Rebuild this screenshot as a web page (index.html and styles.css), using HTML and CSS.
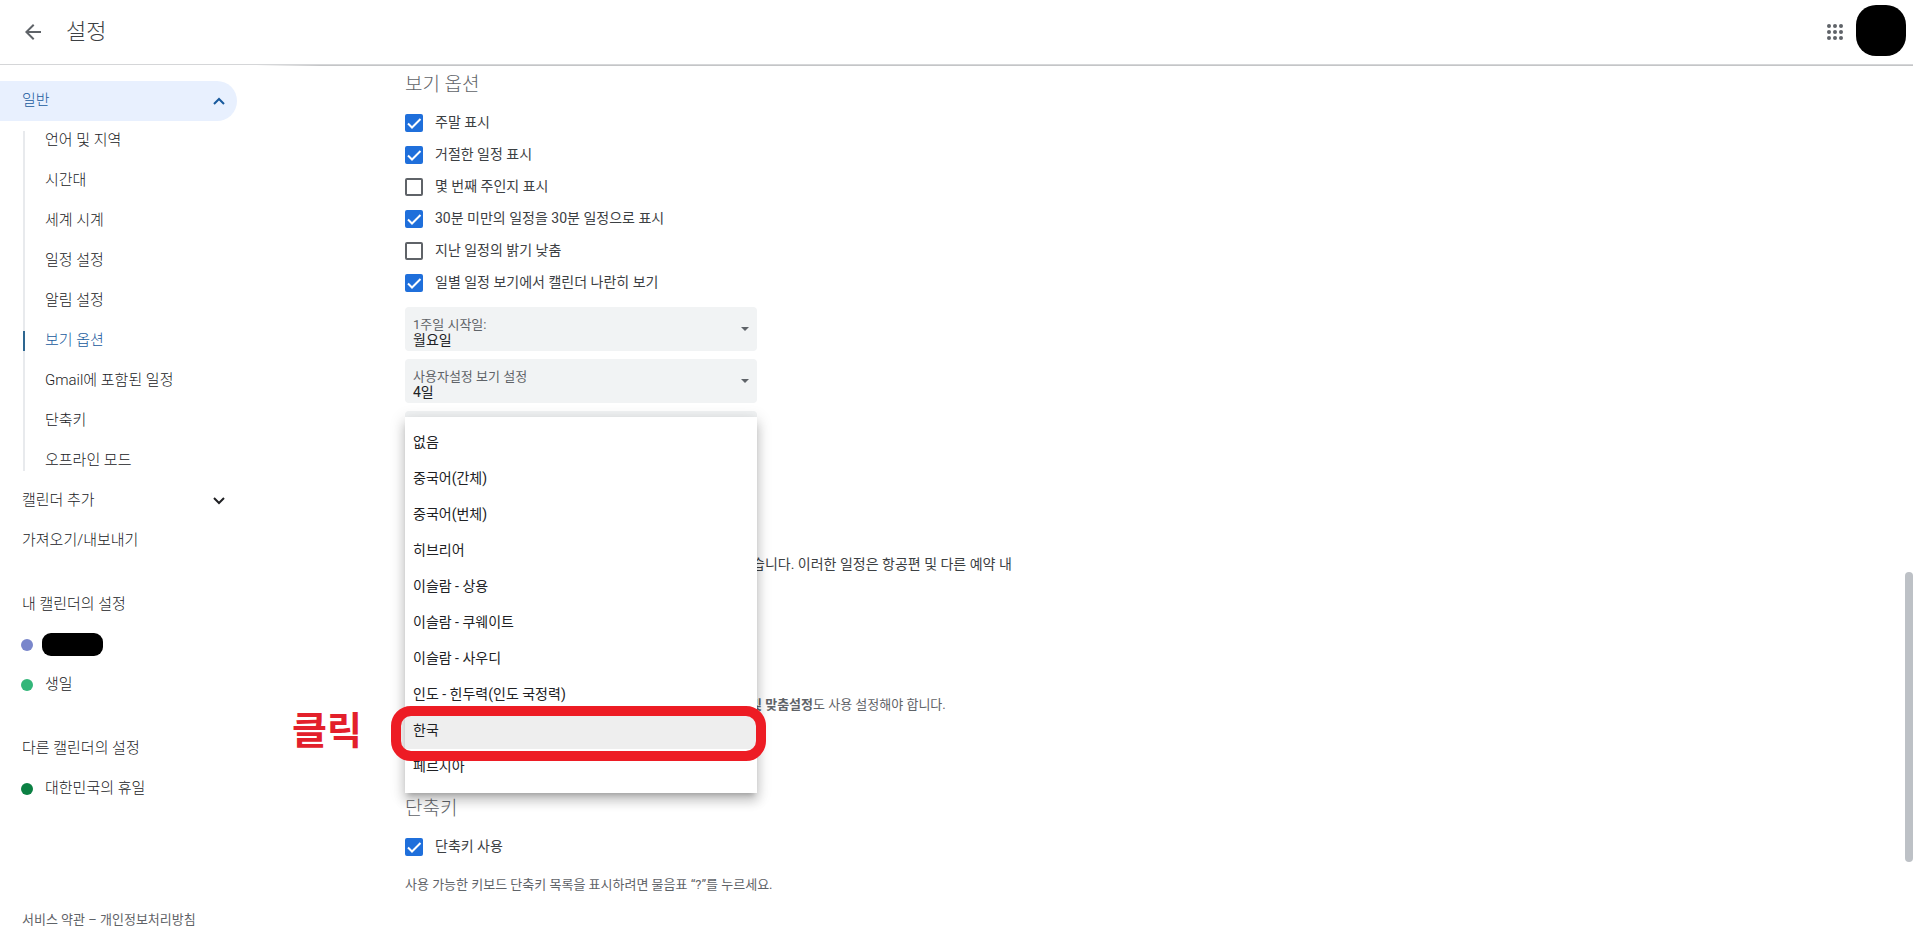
FILE: index.html
```html
<!DOCTYPE html>
<html lang="ko">
<head>
<meta charset="utf-8">
<title>설정</title>
<meta name="viewport" content="width=device-width, initial-scale=1">
<link rel="stylesheet" href="styles.css">
</head>
<body>
<svg class="defs" aria-hidden="true">
  <symbol id="tick" viewBox="0 0 18 18"><path d="M3 9.5 7 13.5 15.5 5" fill="none" stroke="currentColor" stroke-width="2"/></symbol>
  <symbol id="caret" viewBox="0 0 8 4"><path d="M0 0h8L4 4z" fill="currentColor"/></symbol>
</svg>

<header class="topbar">
  <button class="icon-button" type="button" aria-label="뒤로">
    <svg viewBox="0 0 24 24" width="24" height="24"><path d="M20 11H7.83l5.59-5.59L12 4l-8 8 8 8 1.41-1.41L7.83 13H20v-2z" fill="currentColor"/></svg>
  </button>
  <h1 class="title">설정</h1>
  <button class="icon-button apps" type="button" aria-label="앱">
    <svg viewBox="0 0 24 24" width="24" height="24" fill="currentColor">
      <circle cx="6" cy="6" r="2"/><circle cx="12" cy="6" r="2"/><circle cx="18" cy="6" r="2"/>
      <circle cx="6" cy="12" r="2"/><circle cx="12" cy="12" r="2"/><circle cx="18" cy="12" r="2"/>
      <circle cx="6" cy="18" r="2"/><circle cx="12" cy="18" r="2"/><circle cx="18" cy="18" r="2"/>
    </svg>
  </button>
  <button class="avatar" type="button" aria-label="계정"></button>
</header>

<div class="page">
  <nav class="sidebar">
    <button class="nav-row general" type="button" aria-expanded="true">일반
      <svg class="chevron" viewBox="0 0 12 8" width="12" height="8"><path d="M1 7l5-5 5 5" fill="none" stroke="currentColor" stroke-width="2"/></svg>
    </button>
    <div class="subnav">
      <a class="nav-row" href="#">언어 및 지역</a>
      <a class="nav-row" href="#">시간대</a>
      <a class="nav-row" href="#">세계 시계</a>
      <a class="nav-row" href="#">일정 설정</a>
      <a class="nav-row" href="#">알림 설정</a>
      <a class="nav-row current" href="#">보기 옵션</a>
      <a class="nav-row" href="#">Gmail에 포함된 일정</a>
      <a class="nav-row" href="#">단축키</a>
      <a class="nav-row" href="#">오프라인 모드</a>
    </div>
    <button class="nav-row" type="button" aria-expanded="false">캘린더 추가
      <svg class="chevron" viewBox="0 0 12 8" width="12" height="8"><path d="M1 1l5 5 5-5" fill="none" stroke="currentColor" stroke-width="2"/></svg>
    </button>
    <a class="nav-row" href="#">가져오기/내보내기</a>

    <h2 class="nav-row group">내 캘린더의 설정</h2>
    <a class="nav-row calendar" href="#" aria-label="내 캘린더"><span class="dot lavender"></span><span class="redacted"></span></a>
    <a class="nav-row calendar" href="#"><span class="dot sage"></span>생일</a>

    <h2 class="nav-row group">다른 캘린더의 설정</h2>
    <a class="nav-row calendar" href="#"><span class="dot green"></span>대한민국의 휴일</a>

    <p class="legal"><a href="#">서비스 약관</a> – <a href="#">개인정보처리방침</a></p>
  </nav>

  <main class="content">
    <section>
      <h2 class="heading">보기 옵션</h2>
      <label class="check"><span class="box"><input type="checkbox" checked><svg><use href="#tick"/></svg></span>주말 표시</label>
      <label class="check"><span class="box"><input type="checkbox" checked><svg><use href="#tick"/></svg></span>거절한 일정 표시</label>
      <label class="check"><span class="box"><input type="checkbox"></span>몇 번째 주인지 표시</label>
      <label class="check"><span class="box"><input type="checkbox" checked><svg><use href="#tick"/></svg></span>30분 미만의 일정을 30분 일정으로 표시</label>
      <label class="check"><span class="box"><input type="checkbox"></span>지난 일정의 밝기 낮춤</label>
      <label class="check"><span class="box"><input type="checkbox" checked><svg><use href="#tick"/></svg></span>일별 일정 보기에서 캘린더 나란히 보기</label>

      <div class="fields">
        <div class="field">
          <label for="week-start">1주일 시작일:</label>
          <select id="week-start"><option>월요일</option></select>
          <svg class="caret"><use href="#caret"/></svg>
        </div>
        <div class="field">
          <label for="custom-view">사용자설정 보기 설정</label>
          <select id="custom-view"><option>4일</option></select>
          <svg class="caret"><use href="#caret"/></svg>
        </div>
        <div class="field">
          <div class="menu" role="listbox" aria-label="보조 캘린더">
            <button class="option" type="button" role="option">없음</button>
            <button class="option" type="button" role="option">중국어(간체)</button>
            <button class="option" type="button" role="option">중국어(번체)</button>
            <button class="option" type="button" role="option">히브리어</button>
            <button class="option" type="button" role="option">이슬람 - 상용</button>
            <button class="option" type="button" role="option">이슬람 - 쿠웨이트</button>
            <button class="option" type="button" role="option">이슬람 - 사우디</button>
            <button class="option" type="button" role="option">인도 - 힌두력(인도 국정력)</button>
            <div class="marked">
              <button class="option hovered" type="button" role="option">한국</button>
              <span class="ring"></span>
              <strong class="callout">클릭</strong>
            </div>
            <button class="option" type="button" role="option">페르시아</button>
          </div>
        </div>
      </div>
    </section>

    <section class="gmail">
      <p class="description">습니다. 이러한 일정은 항공편 및 다른 예약 내</p>
      <p class="hint indented"><b>및 맞춤설정</b>도 사용 설정해야 합니다.</p>
    </section>

    <section class="shortcuts">
      <h2 class="heading">단축키</h2>
      <label class="check"><span class="box"><input type="checkbox" checked><svg><use href="#tick"/></svg></span>단축키 사용</label>
      <p class="hint">사용 가능한 키보드 단축키 목록을 표시하려면 물음표 “?”를 누르세요.</p>
    </section>
  </main>
</div>
<span class="scroll-thumb"></span>
</body>
</html>
```

FILE: styles.css
```css
* { box-sizing: border-box; }

body {
  margin: 0;
  height: 100vh;
  display: flex;
  flex-direction: column;
  overflow: hidden;
  background: #fff;
  color: #3c4043;
  font: 14px/20px Roboto, "Noto Sans CJK KR", sans-serif;
}

h1, h2, p { margin: 0; font-weight: 300; }
a { color: inherit; text-decoration: none; }
button, select {
  margin: 0;
  padding: 0;
  border: 0;
  background: none;
  color: inherit;
  font: inherit;
  text-align: left;
}
svg { display: block; }
.defs { position: absolute; width: 0; height: 0; }

/* Top bar */
.topbar {
  display: flex;
  align-items: center;
  flex: none;
  height: 65px;
  padding: 0 7px 0 21px;
  border-bottom: 1px solid #d5d6d8;
}
.icon-button { color: #5f6368; }
.title {
  margin-left: 21px;
  font-size: 22px;
  line-height: 28px;
}
.apps { margin-left: auto; }
.avatar {
  width: 50px;
  height: 51px;
  margin: 0 0 3px 9px;
  border-radius: 20px;
  background: #000;
}

.page { display: flex; flex: 1; min-height: 0; }

/* Sidebar */
.sidebar {
  display: flex;
  flex-direction: column;
  flex: none;
  width: 256px;
  padding: 16px 19px 4px 0;
}
.nav-row {
  display: flex;
  align-items: center;
  flex: none;
  width: 100%;
  height: 40px;
  padding: 0 12px 2px 22px;
  font-size: 15px;
  font-weight: 300;
  color: #202124;
}
.chevron { margin: 2px 0 0 auto; }
.general {
  border-radius: 0 20px 20px 0;
  background: #e8f0fe;
  color: #185a9d;
}
.subnav {
  padding-left: 23px;
  background: linear-gradient(#e8eaed, #e8eaed) 23px 10px / 2px 340px no-repeat;
}
.subnav .nav-row { background: 0 10px / 2px 20px no-repeat; }
.subnav .current {
  color: #185a9d;
  background-image: linear-gradient(#2d6690, #2d6690);
}
.group { margin-top: 24px; }
.calendar { padding-left: 21px; }
.dot {
  width: 12px;
  height: 12px;
  margin: 2px 12px 0 0;
  border-radius: 50%;
}
.lavender { background: #7986cb; }
.sage { background: #33b679; }
.green { background: #0b8043; }
.redacted {
  width: 61px;
  height: 23px;
  margin-left: -3px;
  border-radius: 9px;
  background: #000;
}
.legal {
  margin-top: auto;
  padding-left: 22px;
  font-size: 13px;
  font-weight: 400;
  color: #5f6368;
}

/* Settings column */
.content {
  flex: 1;
  min-width: 0;
  padding: 6px 16px 0 149px;
  background: linear-gradient(90deg, transparent, #c4c5c7 64px) 0 0 / 100% 1px no-repeat;
}
.heading {
  height: 36px;
  font-size: 19px;
  line-height: 28px;
  color: #5f6368;
}
.check {
  display: flex;
  align-items: center;
  width: fit-content;
  height: 32px;
  padding-bottom: 2px;
}
.box {
  display: grid;
  width: 18px;
  height: 18px;
  margin: 2px 12px 0 0;
}
.box > * { grid-area: 1 / 1; }
.box input {
  appearance: none;
  width: 18px;
  height: 18px;
  margin: 0;
  border: 2px solid #5f6368;
  border-radius: 2px;
}
.box input:checked { border-color: #1f6fdb; background: #1f6fdb; }
.box svg { width: 18px; height: 18px; color: #fff; pointer-events: none; }

.fields {
  display: flex;
  flex-direction: column;
  gap: 8px;
  width: 352px;
  padding-top: 8px;
}
.field {
  position: relative;
  display: flex;
  flex-direction: column;
  height: 44px;
  padding: 10px 8px 0;
  border-radius: 4px;
  background: #f1f3f4;
}
.field label { font-size: 13px; line-height: 15px; color: #5f6368; }
.field select { appearance: none; height: 16px; line-height: 16px; color: #202124; }
.caret {
  position: absolute;
  right: 8px;
  top: 20px;
  width: 8px;
  height: 4px;
  color: #5f6368;
  pointer-events: none;
}

/* Open drop-down */
.menu {
  position: absolute;
  z-index: 2;
  left: 0;
  right: 0;
  top: 6px;
  padding: 8px 0;
  background: #fff;
  color: #202124;
  box-shadow: 0 5px 5px -3px rgba(0, 0, 0, .2), 0 8px 10px 1px rgba(0, 0, 0, .14), 0 3px 14px 2px rgba(0, 0, 0, .12);
}
.option {
  display: block;
  width: 100%;
  height: 36px;
  padding: 0 8px 2px;
}
.hovered { background: #eee; }
.marked { position: relative; }
.ring {
  position: absolute;
  z-index: 1;
  inset: -7px -9px -12px -14px;
  border: 10px solid #ed1c24;
  border-radius: 20px;
  pointer-events: none;
}
.callout {
  position: absolute;
  right: 100%;
  top: -4px;
  margin-right: 43px;
  font-size: 38px;
  line-height: 44px;
  white-space: nowrap;
  color: #e3202b;
}

.gmail { padding-top: 99px; }
.description { padding-left: 347px; font-weight: 400; }
.hint { font-size: 13px; font-weight: 400; color: #5f6368; }
.indented { padding: 121px 0 0 345px; }
.shortcuts { padding-top: 80px; }
.shortcuts .hint { padding-top: 12px; }

.scroll-thumb {
  position: fixed;
  right: 0;
  top: 572px;
  width: 8px;
  height: 290px;
  border-radius: 4px;
  background: #bdc1c6;
}
```
